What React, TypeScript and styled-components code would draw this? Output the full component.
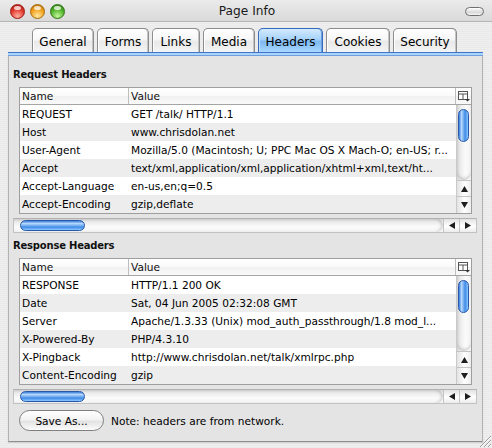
import React from "react";
import styled, { createGlobalStyle, css } from "styled-components";

const GlobalStyle = createGlobalStyle`
  html, body { margin: 0; padding: 0; }
  body {
    font-family: "DejaVu Sans", "Noto Sans", sans-serif;
    color: #000;
    -webkit-font-smoothing: antialiased;
  }
  * { box-sizing: border-box; }
`;

const Window = styled.div`
  position: relative;
  width: 492px;
  height: 448px;
  overflow: hidden;
  display: flex;
  flex-direction: column;
  background: repeating-linear-gradient(to bottom, #efefef 0 1px, #e9e9e9 1px 2px);
`;

const TitleBar = styled.div`
  flex: none;
  height: 22px;
  display: grid;
  grid-template-columns: 1fr auto 1fr;
  align-items: center;
  padding: 0 8px 0 10px;
  border-bottom: 1px solid #b4b4b4;
  background: linear-gradient(#ebebeb, #d9d9d9);
`;

const Lights = styled.div`
  display: flex;
  gap: 5px;
`;

const Light = styled.span<{ $base: string; $light: string; $dark: string }>`
  position: relative;
  width: 15px;
  height: 15px;
  border-radius: 50%;
  border: 1px solid ${(p) => p.$dark};
  background: radial-gradient(circle at 50% 85%, ${(p) => p.$light} 0%, ${(p) => p.$base} 55%, ${(p) => p.$dark} 100%);
  &::after {
    content: "";
    position: absolute;
    left: 3px;
    top: 1px;
    width: 7px;
    height: 4px;
    border-radius: 50%;
    background: rgba(255, 255, 255, 0.75);
  }
`;

const Title = styled.div`
  font-size: 12.2px;
  color: #1a1a1a;
  line-height: 22px;
`;

const Pill = styled.span`
  justify-self: end;
  width: 19px;
  height: 9px;
  border-radius: 5px;
  border: 1px solid #6f6f6f;
  background: linear-gradient(#ffffff, #d8d8d8 60%, #f4f4f4);
`;

const TabRow = styled.div`
  flex: none;
  display: flex;
  align-items: flex-end;
  gap: 3px;
  height: 24px;
  margin-top: 6px;
  padding-left: 32px;
`;

const Tab = styled.div<{ $w: number; $active?: boolean }>`
  width: ${(p) => p.$w}px;
  height: 24px;
  display: flex;
  align-items: center;
  justify-content: center;
  padding-top: 2px;
  font-size: 12px;
  border: 1px solid #8d8d8d;
  border-bottom: none;
  border-radius: 5px 5px 0 0;
  background: linear-gradient(#ffffff 0%, #f7f7f7 45%, #e9e9e9 55%, #f4f4f4 100%);
  box-shadow: inset 1px 0 0 #ffffff, inset -1px 0 0 #c4c4c4;
  ${(p) =>
    p.$active &&
    css`
      border-color: #3769bd;
      background: linear-gradient(#d3eafd 0%, #a6d2fa 45%, #7db9f1 55%, #a9d8ff 100%);
      box-shadow: inset 1px 0 0 #c6e2fb, inset -1px 0 0 #6a9fe0;
    `}
`;

const BlueBar = styled.div`
  flex: none;
  height: 4px;
  margin: 0 9px 0 8px;
  border-top: 1px solid #3f76cb;
  border-bottom: 1px solid #6e9fe0;
  background: #a9d3f8;
`;

const Panel = styled.div`
  flex: none;
  margin: 0 9px 0 8px;
  display: flex;
  flex-direction: column;
  padding: 12px 5px 10px 4px;
  background: #e4e4e4;
  border-left: 1px solid #b2b2b2;
  border-right: 1px solid #b2b2b2;
  border-bottom: 1px solid #8e8e8e;
  box-shadow: 0 1px 1px rgba(0, 0, 0, 0.12);
`;

const Section = styled.section`
  display: flex;
  flex-direction: column;
  & + & {
    margin-top: 6px;
  }
`;

const SectionLabel = styled.div`
  height: 13px;
  font-size: 10px;
  font-weight: bold;
  line-height: 13px;
  letter-spacing: -0.2px;
  color: #111;
`;

const TableBox = styled.div`
  margin: 6px 5px 0 6px;
  border: 1px solid #9e9e9e;
  background: #ffffff;
`;

const HeadRow = styled.div`
  display: flex;
  height: 17px;
  border-bottom: 1px solid #a5a5a5;
  background: linear-gradient(#ffffff, #fafafa 50%, #f1f1f1 51%, #f9f9f9);
`;

const HeadCell = styled.div<{ $w?: number }>`
  ${(p) => (p.$w ? `width: ${p.$w}px; flex: none;` : "flex: 1;")}
  border-right: 1px solid #bebebe;
  padding-left: 2px;
  font-size: 10.6px;
  line-height: 16px;
  color: #111;
`;

const PickerCell = styled.div`
  flex: none;
  width: 15px;
  display: flex;
  align-items: center;
  justify-content: center;
`;

const Body = styled.div`
  display: flex;
  height: 108px;
`;

const Rows = styled.div`
  flex: 1;
  min-width: 0;
  display: flex;
  flex-direction: column;
`;

const Row = styled.div<{ $alt: boolean }>`
  height: 18px;
  display: flex;
  font-size: 10.6px;
  line-height: 18px;
  white-space: nowrap;
  background: ${(p) => (p.$alt ? "#ededed" : "#ffffff")};
`;

const NameCell = styled.div`
  flex: none;
  width: 109px;
  padding-left: 2px;
  overflow: hidden;
`;

const ValueCell = styled.div`
  flex: 1;
  min-width: 0;
  padding-left: 2px;
  overflow: hidden;
`;

const VScroll = styled.div`
  flex: none;
  width: 15px;
  display: flex;
  flex-direction: column;
  border-left: 1px solid #c9c9c9;
  background: linear-gradient(90deg, #d4d4d4 0%, #ececec 25%, #fbfbfb 60%, #f2f2f2 100%);
`;

const VTrack = styled.div`
  flex: 1;
  padding: 4px 0 0 1px;
  border-radius: 0 0 7px 7px;
  box-shadow: inset 0 -3px 3px -1px rgba(0, 0, 0, 0.16);
`;

const thumbFill = (dir: string) =>
  `linear-gradient(${dir}, #3b7dda 0%, #b4d8fc 28%, #72abee 52%, #3f8ae8 68%, #8ecaff 100%)`;

const VThumb = styled.div`
  width: 11px;
  height: 33px;
  border-radius: 6px;
  border: 1px solid #2858a9;
  background: ${thumbFill("90deg")};
`;

const ArrowBtn = styled.div<{ $h: number; $vertical?: boolean }>`
  flex: none;
  display: flex;
  align-items: center;
  justify-content: center;
  ${(p) =>
    p.$vertical
      ? css`
          height: ${p.$h}px;
          border-top: 1px solid #c4c4c4;
          background: linear-gradient(90deg, #e2e2e2, #ffffff 55%, #ececec);
        `
      : css`
          width: ${p.$h}px;
          border-left: 1px solid #c4c4c4;
          background: linear-gradient(#e2e2e2, #ffffff 55%, #ececec);
        `}
`;

const HScroll = styled.div`
  height: 15px;
  margin-top: 4px;
  display: flex;
  border: 1px solid #c2c2c2;
  border-top-color: #b2b2b2;
  background: linear-gradient(#d2d2d2 0%, #ececec 25%, #fbfbfb 60%, #f3f3f3 100%);
`;

const HTrack = styled.div`
  flex: 1;
  padding: 1px 0 0 6px;
  border-radius: 0 7px 7px 0;
  box-shadow: inset -3px 0 3px -1px rgba(0, 0, 0, 0.16);
`;

const HThumb = styled.div`
  width: 65px;
  height: 11px;
  border-radius: 6px;
  border: 1px solid #2858a9;
  background: ${thumbFill("180deg")};
`;

const Footer = styled.div`
  display: flex;
  align-items: center;
  margin-top: 6px;
  padding-left: 6px;
  height: 21px;
`;

const Button = styled.button`
  width: 85px;
  height: 21px;
  padding: 0;
  border-radius: 11px;
  border: 1px solid #7f7f7f;
  background: linear-gradient(#ffffff 0%, #f3f3f3 45%, #e3e3e3 55%, #fbfbfb 100%);
  font-family: inherit;
  font-size: 10.6px;
  color: #000;
`;

const Note = styled.span`
  margin-left: 7px;
  font-size: 10.6px;
`;

const Grip = styled.svg`
  position: absolute;
  right: 1px;
  bottom: 1px;
`;

type Entry = [string, string];

const request: Entry[] = [
  ["REQUEST", "GET /talk/ HTTP/1.1"],
  ["Host", "www.chrisdolan.net"],
  ["User-Agent", "Mozilla/5.0 (Macintosh; U; PPC Mac OS X Mach-O; en-US; r..."],
  ["Accept", "text/xml,application/xml,application/xhtml+xml,text/ht..."],
  ["Accept-Language", "en-us,en;q=0.5"],
  ["Accept-Encoding", "gzip,deflate"],
];

const response: Entry[] = [
  ["RESPONSE", "HTTP/1.1 200 OK"],
  ["Date", "Sat, 04 Jun 2005 02:32:08 GMT"],
  ["Server", "Apache/1.3.33 (Unix) mod_auth_passthrough/1.8 mod_l..."],
  ["X-Powered-By", "PHP/4.3.10"],
  ["X-Pingback", "http://www.chrisdolan.net/talk/xmlrpc.php"],
  ["Content-Encoding", "gzip"],
];

const tabs = [
  { label: "General", w: 62 },
  { label: "Forms", w: 52 },
  { label: "Links", w: 48 },
  { label: "Media", w: 52 },
  { label: "Headers", w: 65, active: true },
  { label: "Cookies", w: 64 },
  { label: "Security", w: 64 },
];

const Tri = ({ dir }: { dir: "up" | "down" | "left" | "right" }) => {
  const pts = {
    up: "3.5,0 7,6 0,6",
    down: "0,0 7,0 3.5,6",
    left: "0,3.5 6,0 6,7",
    right: "0,0 6,3.5 0,7",
  }[dir];
  const vert = dir === "up" || dir === "down";
  return (
    <svg width={vert ? 7 : 6} height={vert ? 6 : 7} viewBox={vert ? "0 0 7 6" : "0 0 6 7"}>
      <polygon points={pts} fill="#1e1e1e" />
    </svg>
  );
};

const PickerIcon = () => (
  <svg width="12" height="11" viewBox="0 0 12 11">
    <rect x="0.5" y="0.5" width="9" height="8" fill="#fff" stroke="#555" />
    <line x1="0.5" y1="3" x2="9.5" y2="3" stroke="#555" />
    <line x1="5" y1="3" x2="5" y2="8.5" stroke="#555" />
    <polygon points="7,8 12,8 9.5,10.5" fill="#333" />
  </svg>
);

const HeaderTable = ({ title, rows }: { title: string; rows: Entry[] }) => (
  <Section>
    <SectionLabel>{title}</SectionLabel>
    <TableBox>
      <HeadRow>
        <HeadCell $w={109}>Name</HeadCell>
        <HeadCell>Value</HeadCell>
        <PickerCell>
          <PickerIcon />
        </PickerCell>
      </HeadRow>
      <Body>
        <Rows>
          {rows.map(([n, v], i) => (
            <Row key={n} $alt={i % 2 === 1}>
              <NameCell>{n}</NameCell>
              <ValueCell>{v}</ValueCell>
            </Row>
          ))}
        </Rows>
        <VScroll>
          <VTrack>
            <VThumb />
          </VTrack>
          <ArrowBtn $vertical $h={16}>
            <Tri dir="up" />
          </ArrowBtn>
          <ArrowBtn $vertical $h={17}>
            <Tri dir="down" />
          </ArrowBtn>
        </VScroll>
      </Body>
    </TableBox>
    <HScroll>
      <HTrack>
        <HThumb />
      </HTrack>
      <ArrowBtn $h={16}>
        <Tri dir="left" />
      </ArrowBtn>
      <ArrowBtn $h={17}>
        <Tri dir="right" />
      </ArrowBtn>
    </HScroll>
  </Section>
);

export default function App() {
  return (
    <>
      <GlobalStyle />
      <Window>
        <TitleBar>
          <Lights>
            <Light $base="#e2372d" $light="#ffb0a0" $dark="#9c1a12" />
            <Light $base="#f2a11f" $light="#ffe9a0" $dark="#a86a08" />
            <Light $base="#4fb22b" $light="#c2f79a" $dark="#2c7414" />
          </Lights>
          <Title>Page Info</Title>
          <Pill />
        </TitleBar>
        <TabRow>
          {tabs.map((t) => (
            <Tab key={t.label} $w={t.w} $active={t.active}>
              {t.label}
            </Tab>
          ))}
        </TabRow>
        <BlueBar />
        <Panel>
          <HeaderTable title="Request Headers" rows={request} />
          <HeaderTable title="Response Headers" rows={response} />
          <Footer>
            <Button>Save As...</Button>
            <Note>Note: headers are from network.</Note>
          </Footer>
        </Panel>
        <Grip width="13" height="13" viewBox="0 0 13 13">
          <line x1="2" y1="13" x2="13" y2="2" stroke="#9a9a9a" />
          <line x1="3" y1="13" x2="13" y2="3" stroke="#fff" />
          <line x1="6" y1="13" x2="13" y2="6" stroke="#9a9a9a" />
          <line x1="7" y1="13" x2="13" y2="7" stroke="#fff" />
          <line x1="10" y1="13" x2="13" y2="10" stroke="#9a9a9a" />
          <line x1="11" y1="13" x2="13" y2="11" stroke="#fff" />
        </Grip>
      </Window>
    </>
  );
}
